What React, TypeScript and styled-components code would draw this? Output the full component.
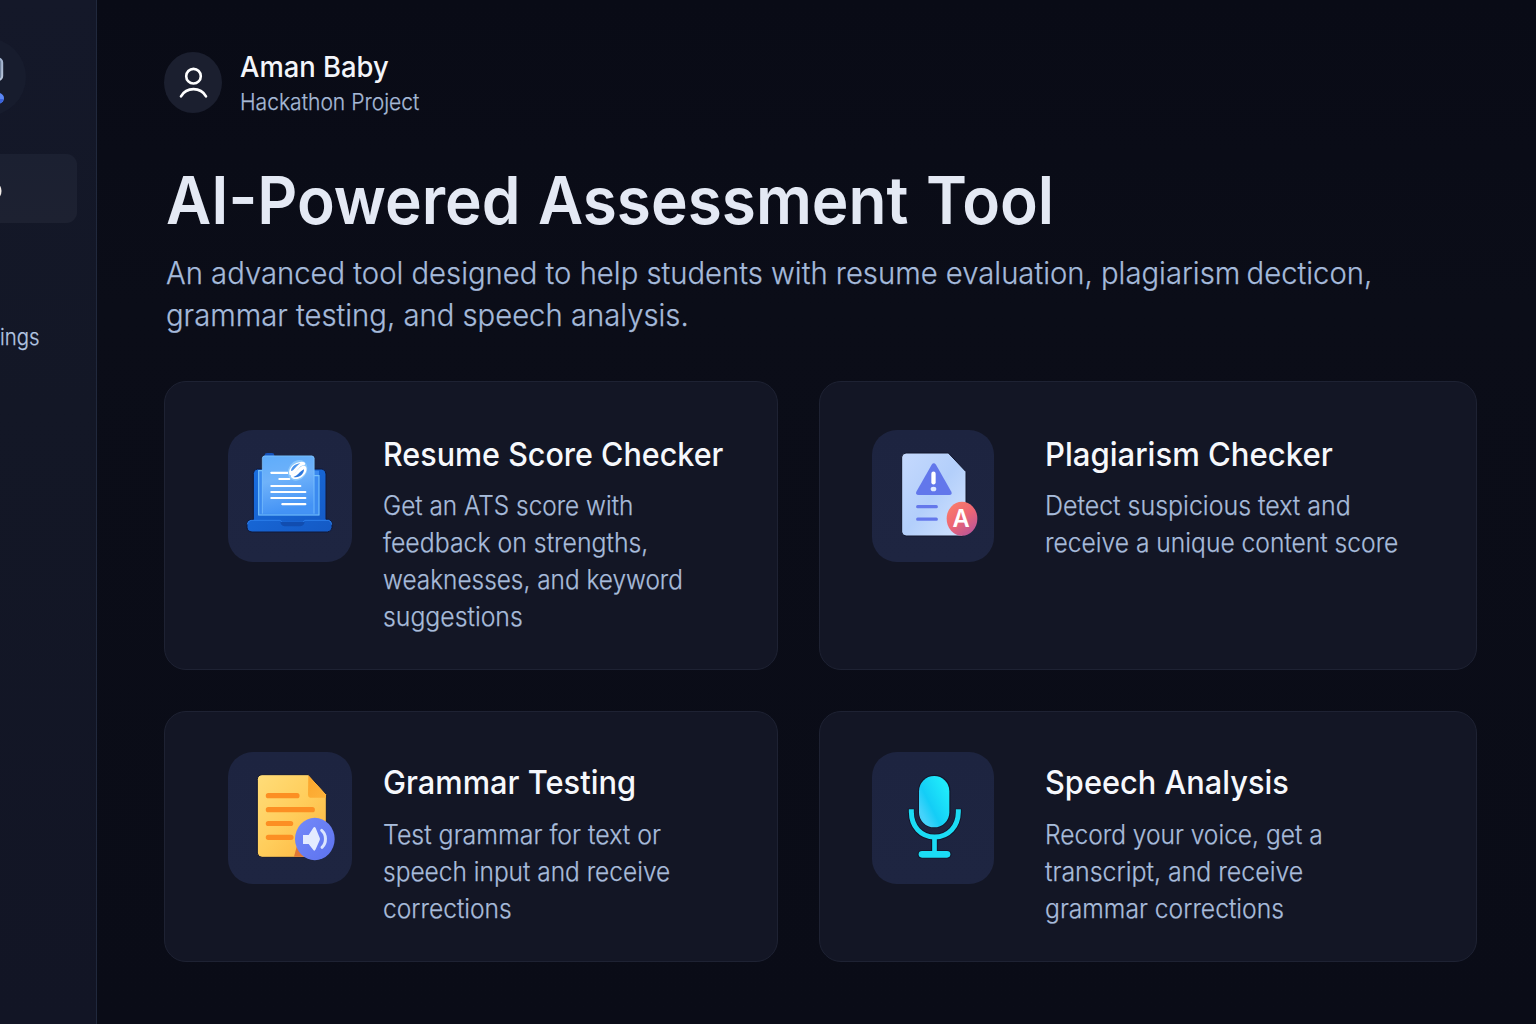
import React from 'react';
import styled, { createGlobalStyle, css } from 'styled-components';

const GlobalStyle = createGlobalStyle`
  *, *::before, *::after { box-sizing: border-box; }
  html, body { margin: 0; padding: 0; background: #0a0c17; }
  body { overflow: hidden; font-family: Inter, "Liberation Sans", sans-serif; -webkit-font-smoothing: antialiased; }
  h1, h2, p { margin: 0; }
  svg { display: block; }
`;

const softLight = css`
  font-weight: 300;
  -webkit-text-stroke: 0.25px currentColor;
`;

const Page = styled.div`
  display: flex;
  width: 1536px;
  height: 1024px;
  overflow: hidden;
  background: linear-gradient(180deg, #090b16 0%, #0b0d18 30%, #0a0c17 100%);
`;

const Sidebar = styled.aside`
  flex: none;
  width: 97px;
  height: 100%;
  padding-top: 38px;
  overflow: hidden;
  border-right: 1px solid #20283c;
  background: linear-gradient(180deg, #141829 0%, #131726 40%, #121525 100%);
`;

const Logo = styled.div`
  width: 78px;
  height: 78px;
  margin-left: -52px;
  border-radius: 50%;
  background: #171c2d;
`;

const ActiveItem = styled.div`
  width: 277px;
  height: 69px;
  margin: 38px 0 0 -200px;
  padding-left: 200px;
  display: flex;
  align-items: center;
  border-radius: 11px;
  background: linear-gradient(180deg, #1b2031, #1d2131);
`;

const NavLabel = styled.div`
  margin-top: 99px;
  font-size: 23px;
  line-height: 30px;
  ${softLight}
  color: #b3c6e2;
`;

const Main = styled.main`
  flex: 1;
  padding: 49px 60px 0 67px;
`;

const Header = styled.header`
  display: flex;
  align-items: flex-start;
  height: 66px;
`;

const Avatar = styled.div`
  width: 58px;
  height: 61px;
  margin: 3px 18px 0 0;
  display: flex;
  align-items: center;
  justify-content: center;
  border-radius: 50%;
  background: #1b1f2f;
`;

const Line = styled.span<{ $fit: number }>`
  display: block;
  width: max-content;
  white-space: nowrap;
  transform: scaleX(${(p) => p.$fit});
  transform-origin: 0 50%;
`;

const Identity = styled.div`
  padding-top: 1px;
`;

const Name = styled.div`
  font-size: 28.3px;
  line-height: 34px;
  font-weight: 500;
  color: #f3f5fa;
`;

const Role = styled.div`
  margin-top: 4px;
  font-size: 22.7px;
  line-height: 28px;
  ${softLight}
  color: #a6b9d6;
`;

const Title = styled.h1`
  margin: 49px 0 0 2px;
  font-size: 66px;
  line-height: 72px;
  font-weight: 570;
  word-spacing: 2px;
  color: #e4e9f4;
`;

const Subtitle = styled.p`
  margin: 16px 0 0 1.5px;
  font-size: 30.7px;
  line-height: 42px;
  ${softLight}
  color: #a5badb;
`;

const Tight = styled.span`
  margin-left: -2px;
`;

const Grid = styled.section`
  margin-top: 45px;
  display: grid;
  grid-template-columns: 614px 658px;
  grid-template-rows: 289px 251px;
  gap: 41px;
`;

const Card = styled.article<{ $left: number; $gap: number; $top: number }>`
  display: flex;
  align-items: flex-start;
  gap: ${(p) => p.$gap}px;
  padding: ${(p) => p.$top}px 0 0 ${(p) => p.$left}px;
  border: 1px solid #1e2233;
  border-radius: 22px;
  background: #131625;
`;

const Tile = styled.div<{ $width: number }>`
  flex: none;
  width: ${(p) => p.$width}px;
  height: 132px;
  border-radius: 25px;
  overflow: hidden;
  background: linear-gradient(180deg, #1d2440, #1e2541);
`;

const CardText = styled.div<{ $offset: number }>`
  padding-top: ${(p) => p.$offset}px;
`;

const CardTitle = styled.h2`
  font-size: 33px;
  line-height: 40px;
  font-weight: 500;
  color: #f6f8fc;
`;

const CardBody = styled.p<{ $gap: number }>`
  margin-top: ${(p) => p.$gap}px;
  font-size: 26.5px;
  line-height: 37px;
  ${softLight}
  color: #a8bcdb;
`;

const LogoMark = () => (
  <svg width="78" height="78" viewBox="-52 38 78 78">
    <defs>
      <linearGradient id="lm" x1="0" x2="0" y1="0" y2="1">
        <stop offset="0" stopColor="#9fb0cc" />
        <stop offset="1" stopColor="#b9c6da" />
      </linearGradient>
    </defs>
    <rect x="-24" y="58.5" width="26.2" height="21.5" rx="4" fill="#71829d" stroke="url(#lm)" strokeWidth="2" />
    <path d="M-20 93H0Q4 95 4 98Q4 102 0 103.500H-20Z" fill="#5a86f5" />
    <path d="M-20 99H3.800Q3 102 0 103.500H-20Z" fill="#3a62dc" />
  </svg>
);

const PersonIcon = () => (
  <svg width="30" height="34" viewBox="0 0 30 34" fill="none" stroke="#fff" strokeWidth="2.6" strokeLinecap="round">
    <circle cx="15.5" cy="10.200" r="7.300" />
    <path d="M3 30.300C8.500 20.700 22.500 20.700 28 30.300" />
  </svg>
);

const ResumeIcon = () => (
  <svg width="124" height="132" viewBox="24 30 372 396">
    <defs>
      <linearGradient id="ra" x1="0" y1="0" x2="0.2" y2="1">
        <stop offset="0" stopColor="#5eacfa" />
        <stop offset="0.45" stopColor="#6fb2fa" />
        <stop offset="1" stopColor="#4493f5" />
      </linearGradient>
      <linearGradient id="rb" x1="0" y1="0" x2="1" y2="1">
        <stop offset="0" stopColor="#1a6fe0" />
        <stop offset="1" stopColor="#1459c4" />
      </linearGradient>
    </defs>
    <rect x="134" y="99" width="29" height="20" rx="7" fill="#1552bb" />
    <path d="M112 147H306Q318 149 318 162V298H326Q336 300 336 312V323Q335 335 322 336H96Q82 335 81 322V311Q82 300 92 299H100V160Q101 148 112 147Z" fill="url(#rb)" stroke="#10193a" strokeWidth="3" />
    <rect x="116" y="152" width="181" height="134" fill="#3b8af0" />
    <path d="M127 152H116V285H297V167H282" fill="none" stroke="#74c0fb" strokeWidth="3.500" />
    <path d="M133 107H276Q283 108 283 115V281H127V114Q128 107 133 107Z" fill="url(#ra)" />
    <path d="M127 281V114Q128 108 134 108H276Q282 109 282 115V281" fill="none" stroke="#83c8ff" strokeWidth="2" />
    <path d="M82 313Q83 303 93 301H181L186 307H249L254 301H325Q335 303 335 314" fill="none" stroke="#2c7eea" strokeWidth="3" />
    <path d="M181 306H254Q252 317 241 319H193Q183 317 181 306Z" fill="#114db0" />
    <path d="M154 158.500H206M178 177H208M154 198H241M154 216H256M154 234H256M187 252.500H256" stroke="#fff" strokeWidth="6.500" strokeLinecap="round" />
    <ellipse cx="233" cy="151" rx="27" ry="33" transform="rotate(36 233 151)" fill="#8cc8fc" />
    <path d="M208 163C204 144 222 126 245 125C258 125 259 135 249 136C238 138 234 151 224 160C217 166 209 168 208 163Z" fill="#fff" />
    <path d="M213 151C216 139 228 131 241 130C232 137 228 141 222 148C218 152 213 155 213 151Z" fill="#4b96ee" />
    <path d="M217 163C228 161 232 146 245 139C256 134 262 142 259 153C254 168 238 179 222 177C213 175 209 166 217 163Z" fill="#fff" />
    <path d="M220 171C234 167 238 155 252 148C252 162 239 175 220 171Z" fill="#2d78dc" />
  </svg>
);

const PlagiarismIcon = () => (
  <svg width="122" height="132" viewBox="24 30 366 396">
    <defs>
      <linearGradient id="pa" x1="0" y1="0" x2="1" y2="1">
        <stop offset="0" stopColor="#c5d9fd" />
        <stop offset="0.5" stopColor="#b3cffb" />
        <stop offset="1" stopColor="#d3e4fe" />
      </linearGradient>
      <linearGradient id="pb" x1="0.1" y1="0" x2="0.8" y2="1">
        <stop offset="0" stopColor="#fb8069" />
        <stop offset="0.5" stopColor="#ee6673" />
        <stop offset="1" stopColor="#b8559a" />
      </linearGradient>
    </defs>
    <path d="M126 99H253L306 155V336Q305 348 293 348H126Q114 347 113 336V111Q114 100 126 99Z" fill="url(#pa)" stroke="#12172d" strokeWidth="3" />
    <path d="M203 134Q209 126 216 134L262 215Q266 224 256 225H164Q153 224 157 215Z" fill="#6277eb" />
    <path d="M208.500 161V187" stroke="#fff" strokeWidth="13" strokeLinecap="round" />
    <ellipse cx="208.500" cy="207" rx="8.500" ry="7" fill="#dce8ff" />
    <path d="M161 260H217M161 297.500H217" stroke="#6478eb" strokeWidth="9.500" strokeLinecap="round" />
    <ellipse cx="294" cy="296" rx="46" ry="51" fill="url(#pb)" />
    <text x="291.500" y="321" textAnchor="middle" fontFamily="Inter, sans-serif" fontSize="71" fontWeight="600" fill="#fff">A</text>
  </svg>
);

const GrammarIcon = () => (
  <svg width="124" height="132" viewBox="24 24 372 396">
    <defs>
      <linearGradient id="ga" x1="0" y1="0" x2="1" y2="1">
        <stop offset="0" stopColor="#ffdd79" />
        <stop offset="0.5" stopColor="#ffcd5b" />
        <stop offset="1" stopColor="#fcb33e" />
      </linearGradient>
      <linearGradient id="gb" x1="0" y1="0" x2="1" y2="1">
        <stop offset="0" stopColor="#748afa" />
        <stop offset="1" stopColor="#5c72ee" />
      </linearGradient>
      <linearGradient id="gc" x1="0" y1="0" x2="1" y2="1">
        <stop offset="0" stopColor="#fba52c" />
        <stop offset="1" stopColor="#fdb23a" />
      </linearGradient>
    </defs>
    <path d="M126 92H265L319 151V327Q318 339 306 340H126Q113 339 112 327V106Q113 93 126 92Z" fill="url(#ga)" stroke="#151a33" strokeWidth="3" />
    <path d="M265 94L318 152V161H270Q264 160 264 153Z" fill="url(#gc)" />
    <path d="M145 155H231M145 197H277M145 238.500H212M145 280H213" stroke="#fc8f23" strokeWidth="15.500" strokeLinecap="round" />
    <path d="M230 308L252 338H222Z" fill="#e07835" />
    <ellipse cx="284.500" cy="285" rx="59.500" ry="63.500" fill="url(#gb)" />
    <path d="M249 273H266L280 251Q284 246 287 252L299 281Q301 285 299 289L287 316Q284 323 280 318L266 300H249Z" fill="#e3ebff" />
    <path d="M305 259C320 271 320 297 306 310" fill="none" stroke="#dbe5ff" strokeWidth="9" strokeLinecap="round" />
  </svg>
);

const MicIcon = () => (
  <svg width="122" height="132" viewBox="24 24 366 396">
    <defs>
      <linearGradient id="mb" x1="0.15" y1="0.8" x2="0.85" y2="0.2">
        <stop offset="0" stopColor="#45d3fb" />
        <stop offset="0.35" stopColor="#14cdf6" />
        <stop offset="1" stopColor="#1feafb" />
      </linearGradient>
    </defs>
    <g stroke="#12162b" strokeWidth="5" fill="none">
      <path d="M141.500 194V204C142 247 170 279 212 279S283 247 283.500 204V194" strokeWidth="20" />
      <path d="M211 280V325" strokeWidth="20" />
      <path d="M173 331H250" strokeWidth="25" strokeLinecap="round" />
      <rect x="165" y="95" width="92" height="155" rx="46" />
    </g>
    <rect x="165" y="96" width="91" height="154" rx="45.500" fill="url(#mb)" />
    <g stroke="#1bdcf5" fill="none">
      <path d="M142 196V204C142.500 247 170 279 212 279S282.500 247 283 204V196" strokeWidth="15" />
      <path d="M211.500 279V325" strokeWidth="14" />
      <path d="M174 331H249" strokeWidth="20" strokeLinecap="round" />
    </g>
  </svg>
);

type TextLine = [string, number];

interface Feature {
  title: TextLine;
  body: TextLine[];
  icon: React.ReactNode;
  right: boolean;
  lower: boolean;
}

const features: Feature[] = [
  {
    title: ['Resume Score Checker', 0.924],
    body: [
      ['Get an ATS score with', 0.92],
      ['feedback on strengths,', 0.937],
      ['weaknesses, and keyword', 0.92],
      ['suggestions', 0.936],
    ],
    icon: <ResumeIcon />,
    right: false,
    lower: false,
  },
  {
    title: ['Plagiarism Checker', 0.942],
    body: [
      ['Detect suspicious text and', 0.942],
      ['receive a unique content score', 0.929],
    ],
    icon: <PlagiarismIcon />,
    right: true,
    lower: false,
  },
  {
    title: ['Grammar Testing', 0.934],
    body: [
      ['Test grammar for text or', 0.94],
      ['speech input and receive', 0.924],
      ['corrections', 0.929],
    ],
    icon: <GrammarIcon />,
    right: false,
    lower: true,
  },
  {
    title: ['Speech Analysis', 0.932],
    body: [
      ['Record your voice, get a', 0.926],
      ['transcript, and receive', 0.94],
      ['grammar corrections', 0.932],
    ],
    icon: <MicIcon />,
    right: true,
    lower: true,
  },
];

export default function App() {
  return (
    <>
      <GlobalStyle />
      <Page>
        <Sidebar>
          <Logo>
            <LogoMark />
          </Logo>
          <ActiveItem>
            <svg width="3" height="16" viewBox="0 0 3 16">
              <ellipse cx="-3" cy="10" rx="4.500" ry="7" fill="#f2ece8" />
            </svg>
          </ActiveItem>
          <NavLabel>
            <Line $fit={0.885}>ings</Line>
          </NavLabel>
        </Sidebar>
        <Main>
          <Header>
            <Avatar>
              <PersonIcon />
            </Avatar>
            <Identity>
              <Name>
                <Line $fit={0.967}>Aman Baby</Line>
              </Name>
              <Role>
                <Line $fit={0.929}>Hackathon Project</Line>
              </Role>
            </Identity>
          </Header>
          <Title>
            <Line $fit={0.941}>AI-Powered Assessment Tool</Line>
          </Title>
          <Subtitle>
            <Line $fit={0.953}>
              An advanced tool designed to help students with resume evaluation, plagiarism <Tight>decticon,</Tight>
            </Line>
            <Line $fit={0.953}>grammar testing, and speech analysis.</Line>
          </Subtitle>
          <Grid>
            {features.map((f) => (
              <Card key={f.title[0]} $left={f.right ? 52 : 63} $gap={f.right ? 51 : 30.5} $top={f.lower ? 40 : 48}>
                <Tile $width={f.right ? 122 : 124}>{f.icon}</Tile>
                <CardText $offset={f.lower ? 10.3 : 4}>
                  <CardTitle>
                    <Line $fit={f.title[1]}>{f.title[0]}</Line>
                  </CardTitle>
                  <CardBody $gap={f.lower ? 13.6 : 13}>
                    {f.body.map(([text, fit]) => (
                      <Line key={text} $fit={fit}>
                        {text}
                      </Line>
                    ))}
                  </CardBody>
                </CardText>
              </Card>
            ))}
          </Grid>
        </Main>
      </Page>
    </>
  );
}
